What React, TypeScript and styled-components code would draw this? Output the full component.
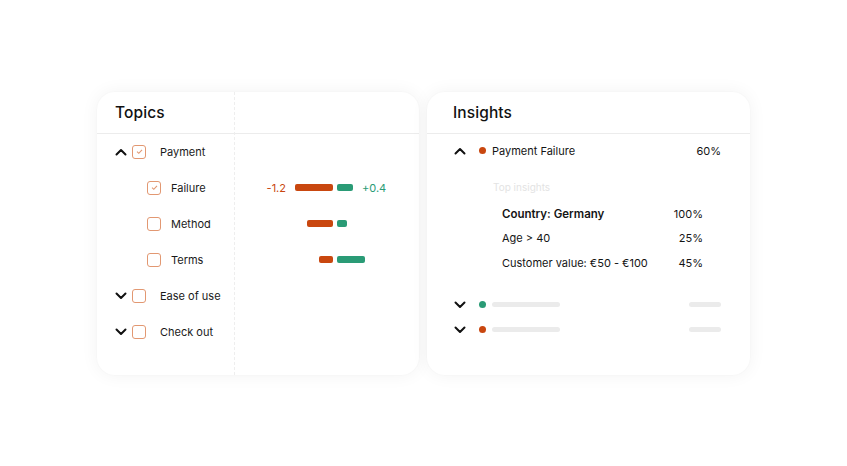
import styled, { createGlobalStyle } from "styled-components";

const ORANGE = "#c9470f";
const GREEN = "#2a9b76";
const BOX = "#e29872";

const GlobalStyle = createGlobalStyle`
  html, body {
    margin: 0;
    padding: 0;
    background: #ffffff;
    font-family: Inter, "Noto Sans", "Liberation Sans", sans-serif;
    color: #141414;
  }
  * {
    box-sizing: border-box;
  }
`;

type Topic = {
  name: string;
  level: 0 | 1;
  open?: boolean;
  checked?: boolean;
  neg?: number;
  pos?: number;
  negLabel?: string;
  posLabel?: string;
};

const TOPICS: Topic[] = [
  { name: "Payment", level: 0, open: true, checked: true },
  { name: "Failure", level: 1, checked: true, neg: 38, pos: 16, negLabel: "-1.2", posLabel: "+0.4" },
  { name: "Method", level: 1, neg: 26, pos: 10 },
  { name: "Terms", level: 1, neg: 14, pos: 28 },
  { name: "Ease of use", level: 0, open: false },
  { name: "Check out", level: 0, open: false },
];

const TOP_INSIGHTS = [
  { label: "Country: Germany", value: "100%", strong: true },
  { label: "Age > 40", value: "25%" },
  { label: "Customer value: €50 - €100", value: "45%" },
];

const Chevron = ({ up }: { up?: boolean }) => (
  <ChevronSvg width="12" height="8" viewBox="0 0 12 8">
    {up ? (
      <polyline points="1.5,6.5 6,2 10.5,6.5" />
    ) : (
      <polyline points="1.5,1.5 6,6 10.5,1.5" />
    )}
  </ChevronSvg>
);

const Check = ({ checked }: { checked?: boolean }) => (
  <CheckBox>
    {checked && (
      <svg width="9" height="9" viewBox="0 0 9 9">
        <polyline
          points="2,4.6 3.8,6.3 7,2.8"
          fill="none"
          stroke={BOX}
          strokeWidth="1.1"
        />
      </svg>
    )}
  </CheckBox>
);

const App = () => {
  return (
    <>
      <GlobalStyle />
      <Page>
        <Cards>
          <TopicsCard>
            <CardHeader $pad={18}>
              <Title>Topics</Title>
            </CardHeader>
            {TOPICS.map((t) => (
              <TopicRow key={t.name}>
                <Tree $level={t.level}>
                  {t.level === 0 ? <Chevron up={t.open} /> : null}
                  <Check checked={t.checked} />
                  <TopicName $level={t.level}>{t.name}</TopicName>
                </Tree>
                <Bars>
                  <BarSide $align="end">
                    {t.negLabel && <Delta $color={ORANGE}>{t.negLabel}</Delta>}
                    {t.neg && <Bar $color={ORANGE} style={{ width: t.neg }} />}
                  </BarSide>
                  <BarSide $align="start">
                    {t.pos && <Bar $color={GREEN} style={{ width: t.pos }} />}
                    {t.posLabel && <Delta $color={GREEN}>{t.posLabel}</Delta>}
                  </BarSide>
                </Bars>
              </TopicRow>
            ))}
          </TopicsCard>

          <InsightsCard>
            <CardHeader $pad={26}>
              <Title>Insights</Title>
            </CardHeader>
            <InsightList>
              <InsightRow>
                <Chevron up />
                <Dot $color={ORANGE} />
                <InsightName>Payment Failure</InsightName>
                <InsightValue>60%</InsightValue>
              </InsightRow>
              <SubBlock>
                <SubTitle>Top insights</SubTitle>
                {TOP_INSIGHTS.map((i) => (
                  <SubRow key={i.label}>
                    <SubLabel $strong={i.strong}>{i.label}</SubLabel>
                    <span>{i.value}</span>
                  </SubRow>
                ))}
              </SubBlock>
              <Placeholders>
                {[GREEN, ORANGE].map((c) => (
                  <InsightRow key={c} $compact>
                    <Chevron />
                    <Dot $color={c} />
                    <SkeletonBar $width={68} />
                    <SkeletonBar $width={32} $right />
                  </InsightRow>
                ))}
              </Placeholders>
            </InsightList>
          </InsightsCard>
        </Cards>
      </Page>
    </>
  );
};

const Page = styled.div`
  width: 100vw;
  height: 100vh;
  display: flex;
  align-items: center;
  justify-content: center;
`;

const Cards = styled.div`
  display: flex;
  gap: 8px;
`;

const Card = styled.div`
  position: relative;
  height: 283px;
  background: #ffffff;
  border-radius: 18px;
  box-shadow: 0 0 18px rgba(0, 0, 0, 0.055), 0 0 2px rgba(0, 0, 0, 0.03);
  overflow: hidden;
`;

const TopicsCard = styled(Card)`
  width: 322px;
  &::before {
    content: "";
    position: absolute;
    top: 0;
    bottom: 0;
    left: 137px;
    border-left: 1px dashed #eeeeee;
  }
`;

const InsightsCard = styled(Card)`
  width: 323px;
`;

const CardHeader = styled.div<{ $pad: number }>`
  height: 42px;
  display: flex;
  align-items: center;
  padding-left: ${(p) => p.$pad}px;
  border-bottom: 1px solid #ececec;
`;

const Title = styled.h2`
  margin: 0;
  font-size: 15.5px;
  font-weight: 500;
  letter-spacing: 0.1px;
  color: #111;
`;

const TopicRow = styled.div`
  height: 36px;
  display: grid;
  grid-template-columns: 137px 1fr;
  align-items: center;
`;

const Tree = styled.div<{ $level: number }>`
  display: flex;
  align-items: center;
  padding-left: ${(p) => (p.$level === 0 ? 18 : 50)}px;
  gap: 5px;
`;

const ChevronSvg = styled.svg`
  flex: none;
  fill: none;
  stroke: #111;
  stroke-width: 2;
  stroke-linecap: round;
  stroke-linejoin: round;
`;

const CheckBox = styled.span`
  flex: none;
  width: 14px;
  height: 14px;
  border: 1px solid ${BOX};
  border-radius: 3px;
  display: flex;
  align-items: center;
  justify-content: center;
`;

const TopicName = styled.span<{ $level: number }>`
  font-size: 11px;
  color: #1a1a1a;
  margin-left: ${(p) => (p.$level === 0 ? 9 : 5)}px;
`;

const Bars = styled.div`
  display: grid;
  grid-template-columns: 99px 1fr;
  gap: 4px;
  align-items: center;
`;

const BarSide = styled.div<{ $align: "start" | "end" }>`
  display: flex;
  align-items: center;
  justify-content: flex-${(p) => p.$align};
  gap: 9px;
`;

const Bar = styled.span<{ $color: string }>`
  height: 7px;
  border-radius: 2px;
  background: ${(p) => p.$color};
`;

const Delta = styled.span<{ $color: string }>`
  font-size: 11px;
  color: ${(p) => p.$color};
`;

const InsightList = styled.div`
  display: flex;
  flex-direction: column;
`;

const InsightRow = styled.div<{ $compact?: boolean }>`
  height: ${(p) => (p.$compact ? 25 : 34)}px;
  display: flex;
  align-items: center;
  padding: 0 29px 0 27px;
  gap: 13px;
`;

const Dot = styled.span<{ $color: string }>`
  flex: none;
  width: 7px;
  height: 7px;
  border-radius: 50%;
  background: ${(p) => p.$color};
  margin-right: -7px;
`;

const InsightName = styled.span`
  font-size: 11px;
  color: #141414;
  flex: 1;
`;

const InsightValue = styled.span`
  font-size: 11px;
  color: #141414;
`;

const SubBlock = styled.div`
  display: flex;
  flex-direction: column;
  padding: 7px 47px 0 66px;
`;

const SubTitle = styled.div`
  font-size: 10px;
  color: #e3e3e3;
  height: 24px;
  display: flex;
  align-items: center;
  margin-bottom: 3px;
`;

const SubRow = styled.div`
  height: 24.5px;
  display: flex;
  align-items: center;
  justify-content: space-between;
  padding-left: 9px;
  font-size: 11px;
  color: #141414;
`;

const SubLabel = styled.span<{ $strong?: boolean }>`
  font-size: ${(p) => (p.$strong ? 11.5 : 11)}px;
  font-weight: ${(p) => (p.$strong ? 600 : 400)};
`;

const Placeholders = styled.div`
  margin-top: 17px;
  display: flex;
  flex-direction: column;
`;

const SkeletonBar = styled.span<{ $width: number; $right?: boolean }>`
  width: ${(p) => p.$width}px;
  height: 5px;
  border-radius: 3px;
  background: #ebebeb;
  margin-left: ${(p) => (p.$right ? "auto" : "0")};
`;

export default App;
